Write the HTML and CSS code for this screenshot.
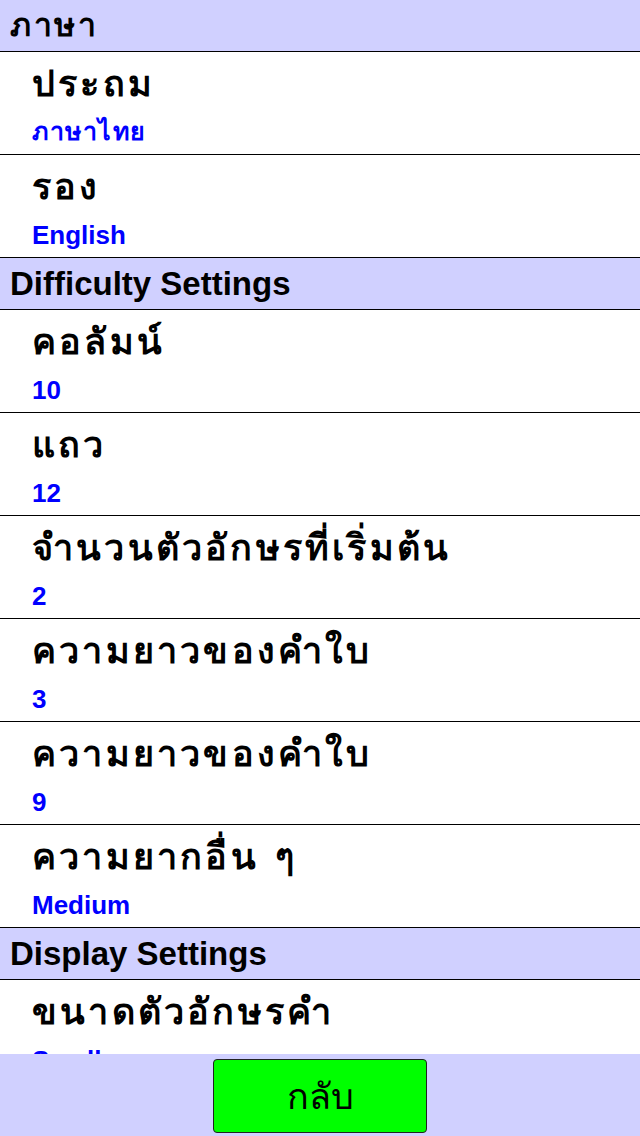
FILE: index.html
```html
<!DOCTYPE html>
<html lang="th">
<head>
<meta charset="utf-8">
<title>Settings</title>
<link rel="stylesheet" href="styles.css">
</head>
<body>
<div class="app">
  <div class="list">
    <div class="section thai">ภาษา</div>
    <div class="row"><div class="title">ประถม</div><div class="value thai">ภาษาไทย</div></div>
    <div class="row"><div class="title">รอง</div><div class="value">English</div></div>
    <div class="section">Difficulty Settings</div>
    <div class="row"><div class="title">คอลัมน์</div><div class="value">10</div></div>
    <div class="row"><div class="title">แถว</div><div class="value">12</div></div>
    <div class="row"><div class="title">จำนวนตัวอักษรที่เริ่มต้น</div><div class="value">2</div></div>
    <div class="row"><div class="title">ความยาวของคำใบ</div><div class="value">3</div></div>
    <div class="row"><div class="title">ความยาวของคำใบ</div><div class="value">9</div></div>
    <div class="row"><div class="title">ความยากอื่น ๆ</div><div class="value">Medium</div></div>
    <div class="section">Display Settings</div>
    <div class="row"><div class="title">ขนาดตัวอักษรคำ</div><div class="value">Small</div></div>
  </div>
  <div class="footer">
    <button class="back">กลับ</button>
  </div>
</div>
</body>
</html>
```
FILE: styles.css
```css
html, body {
  margin: 0;
  padding: 0;
}
body {
  font-family: "Liberation Sans", "DejaVu Sans", sans-serif;
  background: #ffffff;
}
.app {
  width: 640px;
  height: 1136px;
  display: flex;
  flex-direction: column;
  overflow: hidden;
}
.list {
  flex: 1;
  overflow: hidden;
}
.section {
  height: 51px;
  background: #d0d0ff;
  border-bottom: 1px solid #000;
  padding-left: 10px;
  font-size: 33px;
  font-weight: bold;
  line-height: 51px;
  color: #000;
}
.section.thai {
  font-family: "DejaVu Sans", sans-serif;
  font-size: 32px;
  letter-spacing: 2.5px;
}
.row {
  height: 102px;
  border-bottom: 1px solid #000;
  padding-left: 32px;
  display: flex;
  flex-direction: column;
}
.title {
  font-family: "DejaVu Sans", "Liberation Sans", sans-serif;
  font-size: 36px;
  font-weight: bold;
  line-height: 36px;
  padding-top: 14px;
  color: #000;
  letter-spacing: 3.2px;
}
.value {
  font-size: 26px;
  font-weight: bold;
  color: #0000ff;
  line-height: 28px;
  margin-top: 16px;
}
.value.thai {
  font-family: "DejaVu Sans", sans-serif;
  font-size: 25px;
  letter-spacing: 1.5px;
}
.footer {
  height: 82px;
  background: #d0d0ff;
  display: flex;
  justify-content: center;
  align-items: center;
}
.back {
  width: 214px;
  height: 74px;
  background: #00ff00;
  border: 1px solid #222;
  border-radius: 4px;
  font-family: "DejaVu Sans", sans-serif;
  font-size: 36px;
  color: #000;
  padding: 0;
  margin-top: 2px;
}
```
